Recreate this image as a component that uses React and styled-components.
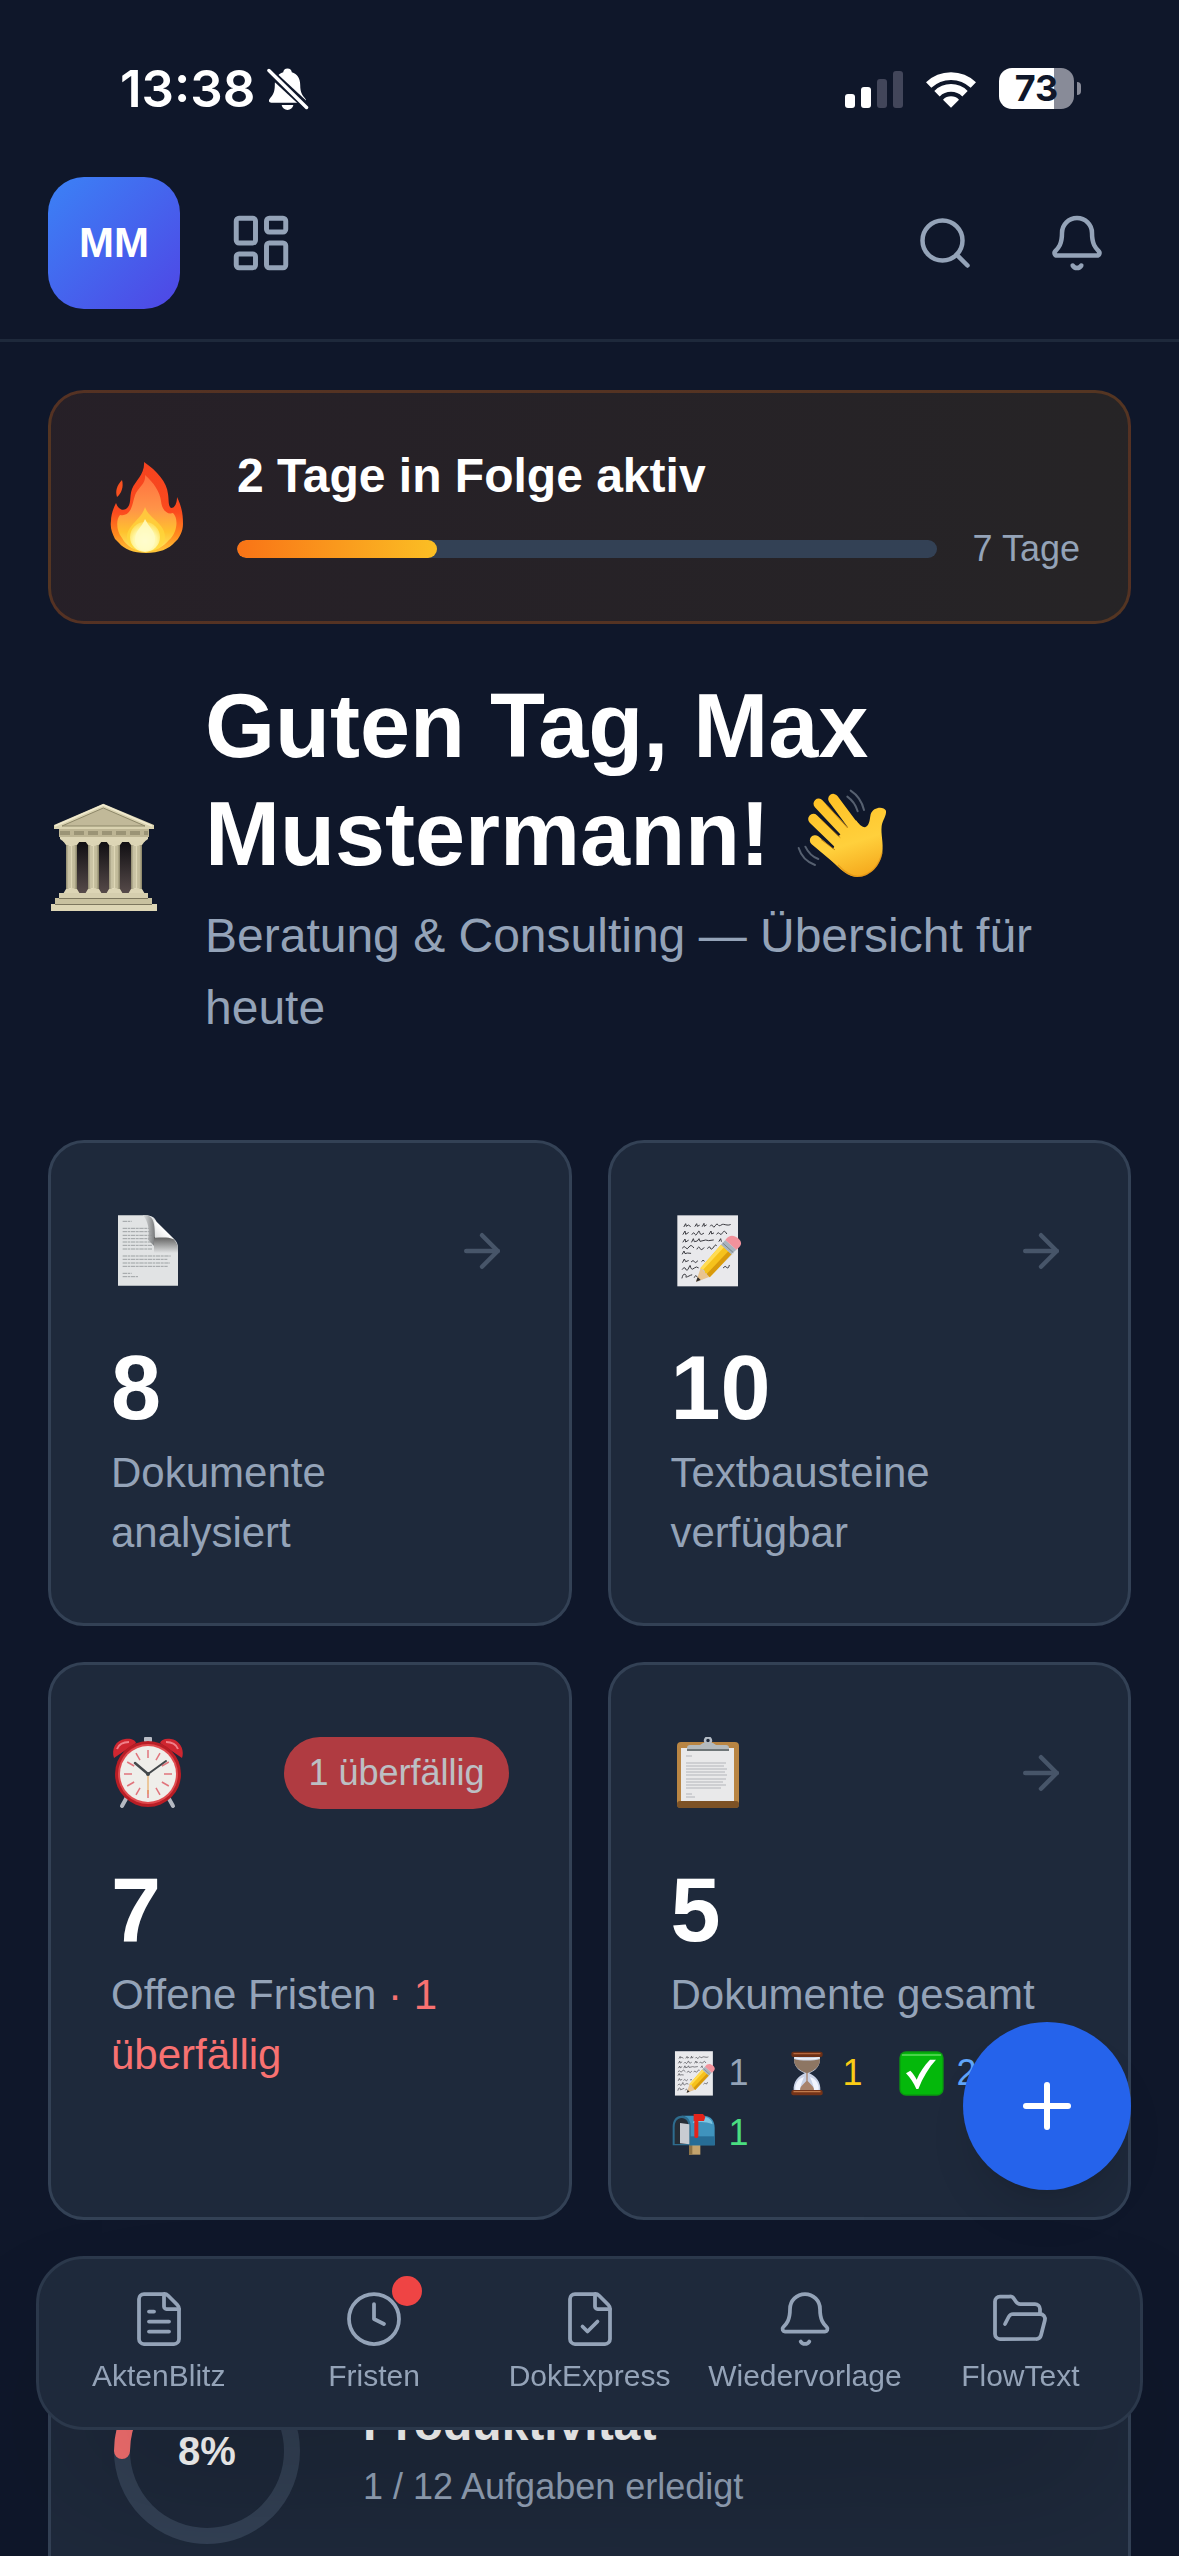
import React from 'react';
import styled, { createGlobalStyle } from 'styled-components';
import {
    ArrowRight, Bell, Clock, FileCheck, FileText, FolderOpen, LayoutDashboard, Plus, Search
} from 'lucide-react';

const GlobalStyle = createGlobalStyle`
    *, *::before, *::after {
        box-sizing: border-box;
    }
    body {
        margin: 0;
        background: #0f172a;
        color: #ffffff;
        font-family: "Liberation Sans", Arial, sans-serif;
    }
    a {
        color: inherit;
        text-decoration: none;
    }
    button {
        font: inherit;
        color: inherit;
        background: none;
        border: 0;
        padding: 0;
        cursor: pointer;
    }
    svg {
        display: block;
        flex: none;
    }
`

const Shell = styled.div`
    display: flex;
    flex-direction: column;
    height: 100vh;
    overflow: hidden;
`

/* ---------- status bar ---------- */

const StatusBar = styled.div`
    display: flex;
    flex: none;
    align-items: center;
    justify-content: space-between;
    height: 153px;
    padding: 24px 98px 0 120px;
    font-family: Inter, sans-serif;
`
const StatusGroup = styled.div`
    display: flex;
    align-items: center;
    gap: ${(props) => props.$gap}px;
`
const Time = styled.span`
    font-size: 51px;
    line-height: 60px;
    font-weight: 600;
`
const BatteryWrap = styled.div`
    display: flex;
    align-items: center;
    gap: 3px;
`
const Battery = styled.div`
    width: 75px;
    height: 41px;
    border-radius: 13px;
    background: linear-gradient(90deg, #ffffff 74%, #888b98 74%);
    color: #0f172a;
    font-size: 36px;
    line-height: 41px;
    font-weight: 700;
    text-align: center;
`
const BatteryCap = styled.div`
    width: 4px;
    height: 13px;
    border-radius: 0 4px 4px 0;
    background: #888b98;
`

/* ---------- top bar ---------- */

const Header = styled.header`
    display: flex;
    flex: none;
    align-items: center;
    justify-content: space-between;
    padding: 24px 48px 30px;
    border-bottom: 3px solid #1e293b;
`
const HeaderGroup = styled.div`
    display: flex;
    align-items: center;
    gap: ${(props) => props.$gap}px;
`
const Avatar = styled.button`
    width: 132px;
    height: 132px;
    border-radius: 36px;
    background: linear-gradient(135deg, #3b82f6, #4f46e5);
    font-size: 42px;
    font-weight: 700;
`
const IconButton = styled.button`
    display: flex;
    align-items: center;
    justify-content: center;
    width: 108px;
    height: 108px;
    color: #94a3b8;
`

/* ---------- content ---------- */

const Main = styled.main`
    flex: 1;
    min-height: 0;
    overflow-y: auto;
    scrollbar-width: none;
    padding: 48px 48px 180px;
`
const Streak = styled.section`
    display: flex;
    align-items: center;
    gap: 42px;
    padding: 48px;
    border: 3px solid rgba(249, 115, 22, 0.22);
    border-radius: 36px;
    background: linear-gradient(90deg, rgba(249, 115, 22, 0.1), rgba(245, 158, 11, 0.1));
`
const StreakBody = styled.div`
    display: flex;
    flex: 1;
    flex-direction: column;
    gap: 14px;
`
const StreakTitle = styled.h2`
    margin: 0;
    font-size: 48px;
    line-height: 70px;
    font-weight: 700;
`
const StreakRow = styled.div`
    display: flex;
    align-items: center;
    gap: 36px;
    font-size: 36px;
    line-height: 48px;
    color: #94a3b8;
`
const Track = styled.div`
    flex: 1;
    height: 18px;
    border-radius: 9px;
    background: #334155;
    overflow: hidden;
`
const Fill = styled.div`
    height: 100%;
    border-radius: 9px;
    background: linear-gradient(90deg, #f97316, #fbbf24);
`

const Greeting = styled.section`
    display: flex;
    align-items: center;
    gap: 44px;
    margin: 48px 0 96px;
`
const GreetingTitle = styled.h1`
    margin: 0 0 12px;
    font-size: 90px;
    line-height: 108px;
    font-weight: 700;
    & > svg {
        display: inline-block;
        vertical-align: -16px;
    }
`
const GreetingText = styled.p`
    margin: 0;
    font-size: 48px;
    line-height: 72px;
    color: #94a3b8;
`

const Grid = styled.div`
    display: grid;
    grid-template-columns: 1fr 1fr;
    gap: 36px;
`
const Card = styled.a`
    display: block;
    padding: 60px;
    border: 3px solid #334155;
    border-radius: 36px;
    background: #1e293b;
`
const CardTop = styled.div`
    display: flex;
    align-items: center;
    justify-content: space-between;
    height: 96px;
    margin-bottom: 44px;
    color: #475569;
`
const Pill = styled.span`
    padding: 12px 24px;
    border-radius: 36px;
    background: #ef4444;
    color: #ffffff;
    font-size: 36px;
    line-height: 48px;
    opacity: 0.7;
`
const Count = styled.div`
    margin-bottom: 10px;
    font-size: 90px;
    line-height: 90px;
    font-weight: 700;
`
const Label = styled.div`
    font-size: 42px;
    line-height: 60px;
    color: #94a3b8;
`
const Overdue = styled.span`
    color: #f87171;
`
const Stats = styled.div`
    display: flex;
    flex-wrap: wrap;
    gap: 12px 36px;
    margin-top: 24px;
`
const Stat = styled.span`
    display: flex;
    align-items: center;
    gap: 13px;
    font-size: 36px;
    line-height: 48px;
    color: ${(props) => props.$color};
`

const Progress = styled.section`
    display: flex;
    align-items: center;
    gap: 60px;
    margin-top: 72px;
    padding: 60px;
    border: 3px solid #334155;
    border-radius: 36px;
    background: #1e293b;
`
const Ring = styled.div`
    display: grid;
    place-items: center;
    & > * {
        grid-area: 1 / 1;
    }
`
const Percent = styled.span`
    font-size: 40px;
    line-height: 60px;
    font-weight: 700;
`
const ProgressTitle = styled.h2`
    margin: 0;
    font-size: 48px;
    line-height: 72px;
    font-weight: 700;
`
const ProgressText = styled.p`
    margin: 0;
    font-size: 36px;
    line-height: 54px;
    color: #94a3b8;
`

/* ---------- floating parts ---------- */

const AddButton = styled.button`
    position: fixed;
    right: 48px;
    bottom: 366px;
    z-index: 20;
    display: flex;
    align-items: center;
    justify-content: center;
    width: 168px;
    height: 168px;
    border-radius: 50%;
    background: #2563eb;
    box-shadow: 0 30px 45px -9px rgba(0, 0, 0, 0.1), 0 12px 18px -12px rgba(0, 0, 0, 0.1);
`
const Nav = styled.nav`
    position: fixed;
    left: 36px;
    right: 36px;
    bottom: 126px;
    z-index: 10;
    display: flex;
    padding: 12px;
    border: 3px solid #2b384b;
    border-radius: 48px;
    background: #1e293b;
    box-shadow: 0 75px 150px -36px rgba(0, 0, 0, 0.25);
`
const NavItem = styled.a`
    display: flex;
    flex: 1 1 0;
    min-width: 0;
    flex-direction: column;
    align-items: center;
    gap: 6px;
    padding: 18px 0;
    color: #94a3b8;
    font-size: 30px;
    line-height: 42px;
`
const NavIcon = styled.span`
    position: relative;
`
const Dot = styled.span`
    position: absolute;
    top: -13px;
    right: -18px;
    width: 30px;
    height: 30px;
    border-radius: 50%;
    background: #ef4444;
`

/* ---------- drawings ---------- */

const BellOff = () => (
    <svg width="42" height="44" viewBox="1 0 43 44" fill="#ffffff">
        <path d="M22 1c-2.600 0-4.200 1.600-4.400 3.900C12 6.500 9 11.500 9 18c0 8-2.500 10.800-5 13.700C2.200 33.800 3 36 5.500 36h33c2.500 0 3.300-2.200 1.500-4.300C37.500 28.800 35 26 35 18c0-6.500-3-11.500-8.600-13.100C26.200 2.600 24.600 1 22 1z" />
        <path d="M16 38.500h12c-.6 3-3 5-6 5s-5.400-2-6-5z" />
        <path d="M3 4L43 41" stroke="#0f172a" strokeWidth="8" />
        <path d="M3 3L41.500 41" stroke="#ffffff" strokeWidth="3.500" strokeLinecap="round" />
    </svg>
)

const Signal = () => (
    <svg width="58" height="38" viewBox="0 0 58 38" fill="#ffffff">
        <rect x="0" y="24" width="10" height="14" rx="3" />
        <rect x="16" y="17" width="10" height="21" rx="3" />
        <rect x="32" y="9" width="10" height="29" rx="3" fill="#42465a" />
        <rect x="48" y="1" width="10" height="37" rx="3" fill="#42465a" />
    </svg>
)

const Wifi = () => (
    <svg width="50" height="38" viewBox="440 85 150 114" fill="none" stroke="#ffffff" strokeWidth="23">
        <path d="M448 130A97 97 0 0 1 582 130" />
        <path d="M473 156A60 60 0 0 1 557 156" />
        <path d="M515 198L491 174A34 34 0 0 1 539 174Z" fill="#ffffff" stroke="none" />
    </svg>
)

const Fire = () => (
    <svg width="96" height="96" viewBox="0 0 96 96">
        <defs>
            <linearGradient id="fire" x1="0" y1="0" x2="0" y2="1">
                <stop offset="0" stopColor="#f4431f" />
                <stop offset="0.55" stopColor="#fb4a1e" />
                <stop offset="0.8" stopColor="#ff8a1e" />
                <stop offset="1" stopColor="#ffc93a" />
            </linearGradient>
            <linearGradient id="fireCore" x1="0" y1="0" x2="0" y2="1">
                <stop offset="0" stopColor="#ff7040" />
                <stop offset="0.45" stopColor="#ff9448" />
                <stop offset="0.75" stopColor="#ffc22e" />
                <stop offset="1" stopColor="#ffe766" />
            </linearGradient>
            <radialGradient id="fireGlow" gradientUnits="userSpaceOnUse" cx="46" cy="82" r="26">
                <stop offset="0" stopColor="#ffffff" />
                <stop offset="0.45" stopColor="#fff7a6" />
                <stop offset="1" stopColor="#ffdf45" stopOpacity="0" />
            </radialGradient>
        </defs>
        <path d="M45 3C58 12 68 23 69 35C70 41 69 47 72 49C76 49 78 44 78 38C83 48 84 56 84 65C84 73 80 78 79 80L76 83C70 90 60 94 47 94C34 94 25 90 20 84L16 80C13 74 11 69 12 62C12 56 14 50 17 44C19 50 23 52 27 50C33 46 30 38 33 30C37 21 46 15 45 3Z" fill="url(#fire)" />
        <path d="M23 21C25 28 22 35 18 38C16 32 18 26 23 21Z" fill="#f8501f" />
        <path d="M46 16C55 24 61 33 62 42C63 52 69 56 74 54C80 60 78 74 70 81C64 88 57 92 47 92C36 92 28 88 23 79C17 72 17 60 21 56C34 58 33 42 37 34C41 27 47 24 46 16Z" fill="url(#fireCore)" />
        <path d="M46 48C50 60 66 64 66 78C66 88 56 93 46 93C37 93 28 87 28 78C28 66 43 60 46 48Z" fill="#ffd83c" opacity="0.7" />
        <circle cx="46" cy="78" r="15" fill="url(#fireGlow)" />
        <path d="M46 60C50 68 56 72 56 80C56 88 51 92 46 92C41 92 36 88 36 80C36 72 43 68 46 60Z" fill="#fffbc4" opacity="0.85" />
    </svg>
)

const Temple = () => (
    <svg width="113" height="113" viewBox="0 0 113 113">
        <defs>
            <linearGradient id="column" x1="0" x2="1">
                <stop offset="0" stopColor="#8f8a6e" />
                <stop offset="0.35" stopColor="#e6dfc0" />
                <stop offset="0.7" stopColor="#d3ccab" />
                <stop offset="1" stopColor="#858064" />
            </linearGradient>
            <linearGradient id="inside" x1="0" y1="0" x2="0" y2="1">
                <stop offset="0" stopColor="#0d0c10" />
                <stop offset="1" stopColor="#574b4a" />
            </linearGradient>
        </defs>
        <rect x="22" y="38" width="70" height="54" fill="url(#inside)" />
        <path d="M55.300 1.700L106 23V27H6V23Z" fill="#d9d2b0" />
        <path d="M55.300 6L97 24H14Z" fill="#c1b999" stroke="#8d8769" strokeWidth="1" />
        <path d="M55.300 3L104 24M55.300 3L7 24" stroke="#f0ead0" strokeWidth="1.500" />
        <rect x="11" y="27" width="90" height="8" fill="#bdb594" />
        <path d="M12 31H100" stroke="#857f63" strokeWidth="4" strokeDasharray="10 4" opacity="0.6" />
        <path d="M12 35H100V37L96 40H16L12 37Z" fill="#ddd6b6" />
        {[18, 40, 61, 83].map((x) => (
            <g key={x}>
                <rect x={x} y="39" width="11" height="52" fill="url(#column)" />
                <path d={`M${x - 3} 39h17l-3 4h-11zM${x - 3} 92h17l-3 -5h-11z`} fill="#dcd5b5" />
                <path d={`M${x + 4} 44v42M${x + 7} 44v42`} stroke="#aaa383" strokeWidth="0.800" />
            </g>
        ))}
        <rect x="11" y="91" width="89" height="6" fill="#d5ceae" />
        <rect x="7" y="96" width="97" height="7" fill="#c8c19f" />
        <rect x="3" y="102" width="106" height="7" fill="#ddd6b5" />
        <path d="M11 96.500H100M7 102.500H104" stroke="#7d775e" strokeWidth="1" />
    </svg>
)

const Wave = () => (
    <svg width="96" height="96" viewBox="39 42 288 288" role="img" aria-label="Winken">
        <defs>
            <linearGradient id="hand" gradientUnits="userSpaceOnUse" x1="150" y1="70" x2="230" y2="320">
                <stop offset="0" stopColor="#ffc125" />
                <stop offset="0.6" stopColor="#ffd03c" />
                <stop offset="1" stopColor="#f5a91d" />
            </linearGradient>
        </defs>
        <g fill="none" stroke="url(#hand)" strokeWidth="31" strokeLinecap="round">
            <path d="M99 208L190 284" />
            <path d="M94 144L195 242" />
            <path d="M110 98L210 205" />
            <path d="M154 84L240 200" />
        </g>
        <path d="M140 258C175 298 200 318 226 318C265 316 294 285 301 245C305 215 296 190 299 165C301 148 314 134 312 119C305 105 273 107 266 130C262 152 262 164 249 169C238 168 230 158 222 148L170 195L155 230Z" fill="url(#hand)" />
        <g fill="none" stroke="#b06c06" strokeWidth="3" strokeLinecap="round" opacity="0.75">
            <path d="M118 206L158 236" />
            <path d="M118 146L174 199" />
            <path d="M136 104L196 170" />
        </g>
        <path d="M168 282C195 312 215 317 232 316C265 312 292 285 300 245" fill="none" stroke="#d98a12" strokeWidth="4" opacity="0.6" />
        <g fill="none" stroke="#566070" strokeWidth="6" strokeLinecap="round">
            <path d="M206 59C226 72 240 92 246 117" />
            <path d="M196 77C210 87 222 103 227 121" />
            <path d="M50 231C57 254 75 273 99 282" />
            <path d="M70 227C78 244 92 258 109 264" />
        </g>
    </svg>
)

const Page = () => (
    <svg width="72" height="72" viewBox="93 104 216 216">
        <defs>
            <linearGradient id="curl" x1="0" y1="1" x2="1" y2="0">
                <stop offset="0" stopColor="#d5d7d8" />
                <stop offset="0.5" stopColor="#ffffff" />
            </linearGradient>
            <linearGradient id="fold" x1="0" y1="0" x2="0" y2="1">
                <stop offset="0" stopColor="#5f5f5f" />
                <stop offset="1" stopColor="#e1e3e4" />
            </linearGradient>
            <linearGradient id="foldSide" x1="0" y1="0" x2="1" y2="0">
                <stop offset="0" stopColor="#e1e3e4" />
                <stop offset="1" stopColor="#6b6d6f" />
            </linearGradient>
        </defs>
        <path d="M114 105H196C216 105 224 112 230 124L282 176C291 184 294 192 294 206V316H114Z" fill="#e1e3e4" />
        <g stroke="#8f9496" strokeWidth="2.500" strokeDasharray="13 2 8 2">
            <path d="M128 123H155M128 144H208M128 154H212M128 165H216M128 175H212M128 185H218M128 195H218M128 206H216" />
            <path d="M128 227H272M128 237H262M128 248H270M128 258H263M128 279H155M128 289H174" />
        </g>
        <path d="M188 105C216 104 225 114 225 174V200L204 178C210 150 204 120 188 105Z" fill="url(#foldSide)" opacity="0.9" />
        <path d="M222 170H270C284 176 292 188 294 204V218H222Z" fill="url(#fold)" />
        <path d="M222 118L282 177C264 169 244 172 225 172C227 152 227 134 222 118Z" fill="url(#curl)" />
    </svg>
)

const Memo = ({ size = 72 }) => (
    <svg width={size} height={size} viewBox="93 104 216 216">
        <rect x="112" y="105" width="182" height="213" fill="#e9e9ec" />
        <g fill="none" stroke="#3c3c42" strokeWidth="3" strokeLinecap="round">
            <path d="M132 139l5-9 2 8 6-4 6 4M165 138l5-8 2 8 6-3M187 138l5-9 1 9 6-4M211 137q4-8 7 0t8-1 8-3 8 2 9-3 10 2 10-1" />
            <path d="M129 162l6-10 2 10 8-5M156 162q5-9 8-1t8-2 6-6 3 8 10-2M207 162l6-10 2 9 6-3M230 161q5-8 9-1t9-3 12 3" />
            <path d="M129 185l6-9 2 9 8-5M155 185l5-10 3 9 9-2 5-7 3 8 9-2 8-2 9 2 14-2M237 183l5-8 2 8" />
            <path d="M127 203q6-9 10-1t10-2 14 2M171 206q5-11 9-2t12-2M203 204q5-9 8-1t10-3 8-4" />
            <path d="M127 221l5-9 3 8 7-2 10 1" />
            <path d="M128 246l5-10 4 8 8-3M154 244q6-7 9 0t10-2M185 243q4-7 8-1" />
            <path d="M127 267q6-10 10-1t9-3 5-7 3 9 9-2 12-1M250 262q6-8 10-1t8-6" />
            <path d="M126 293q3-14 9-11t3 7 9-2 9-3M163 291q4-10 8-2" />
        </g>
        <path d="M170 306L184 264L246 194L278 221L216 283Z" fill="#8b8b92" opacity="0.35" />
        <path d="M168 304L182 263L208 290Z" fill="#e9c48f" />
        <path d="M168 304L173 290L182 299Z" fill="#2e2b2b" />
        <path d="M181 264L243 193L274 222L209 291C206 282 200 278 196 279C195 271 190 265 181 264Z" fill="#f6c21c" />
        <path d="M181 264L243 193L252 201L189 268Z" fill="#ffdc54" />
        <path d="M200 281L265 213L274 222L209 291Z" fill="#d99a0c" />
        <path d="M243 193L256 179L289 208L274 222Z" fill="#a9b4bd" />
        <path d="M248 188L280 217" stroke="#76828c" strokeWidth="3" />
        <path d="M256 179C268 162 282 164 294 174C306 184 308 196 289 208Z" fill="#f2929c" />
    </svg>
)

const AlarmClock = () => (
    <svg width="72" height="72" viewBox="0 0 72 72">
        <path d="M16 60L11 69M57 60L62 69" stroke="#b5b9c2" strokeWidth="4" strokeLinecap="round" />
        <rect x="33" y="0" width="8" height="5" rx="1" fill="#b9bdc6" />
        <path d="M3 21C0 12 5 3 14 2C20 1 24 3 25 6Z" fill="#cf2630" />
        <path d="M71 21C74 12 68 3 60 2C54 1 50 3 49 6Z" fill="#cf2630" />
        <path d="M6 12C8 7 13 5 18 5M55 5C60 5 65 7 67 12" fill="none" stroke="#f0808a" strokeWidth="2" />
        <circle cx="37" cy="37" r="33" fill="#b91d25" />
        <circle cx="37" cy="37" r="30" fill="#e04a4e" />
        <circle cx="37" cy="37" r="28" fill="#efeeea" />
        <g stroke="#e0737b" strokeWidth="1.500">
            {[0, 30, 60, 90, 120, 150, 180, 210, 240, 270, 300, 330].map((angle) => (
                <path key={angle} d="M37 13v8" transform={`rotate(${angle} 37 37)`} />
            ))}
        </g>
        <path d="M37 37L24 26" stroke="#43484b" strokeWidth="2.500" strokeLinecap="round" />
        <path d="M37 37L55 24" stroke="#43484b" strokeWidth="2" strokeLinecap="round" />
        <path d="M37 37V57" stroke="#e8a04c" strokeWidth="1" />
        <circle cx="37" cy="37" r="2" fill="#43484b" />
    </svg>
)

const Clipboard = () => (
    <svg width="72" height="72" viewBox="0 0 72 72">
        <rect x="6" y="5" width="62" height="66" rx="4" fill="#b98543" />
        <rect x="6" y="64" width="62" height="7" rx="3" fill="#7d5226" />
        <rect x="10" y="11" width="53" height="53" fill="#e9e9ea" />
        <circle cx="37" cy="3.500" r="3" fill="none" stroke="#b4bcc6" strokeWidth="2.500" />
        <path d="M32 6H42L45 8H55C57 8 58 9 58 11V14H16V11C16 9 17 8 19 8H29Z" fill="#b4babd" />
        <path d="M16 13H58" stroke="#6f7678" strokeWidth="2" />
        <path d="M15 19H21M15 26H55M15 29H53M15 32H56M15 35H54M15 38H56M15 42H55M15 45H52M15 48H55M15 51H50M15 57H21M15 60H24" stroke="#b3b6ba" strokeWidth="1.200" />
    </svg>
)

const Hourglass = () => (
    <svg width="45" height="45" viewBox="379 60 135 135">
        <path d="M406 78H484C486 104 472 118 452 127C472 136 487 152 485 180H405C403 152 418 136 438 127C418 118 404 104 406 78Z" fill="#c9d2e6" />
        <path d="M406 84C424 90 466 90 484 84C485 106 468 119 445 127C422 119 405 106 406 84Z" fill="#8d7663" />
        <path d="M408 80C425 85 465 85 482 80" stroke="#f3f3f5" strokeWidth="4" fill="none" />
        <path d="M443 126H447V150C456 160 468 170 470 180H420C422 170 434 160 443 150Z" fill="#a8836c" />
        <path d="M410 176C408 156 422 142 436 138C430 152 424 166 424 178ZM480 176C482 156 468 142 454 138C460 152 466 166 466 178Z" fill="#f2f5ff" />
        <rect x="398" y="62" width="94" height="16" rx="6" fill="#6d3016" />
        <rect x="404" y="66" width="82" height="4" rx="2" fill="#b5663d" />
        <rect x="398" y="177" width="94" height="16" rx="6" fill="#743318" />
        <rect x="404" y="180" width="82" height="4" rx="2" fill="#c07a4c" />
    </svg>
)

const CheckMark = () => (
    <svg width="45" height="45" viewBox="720 60 135 135">
        <rect x="721" y="61" width="133" height="133" rx="20" fill="#0a9a10" />
        <rect x="725" y="65" width="125" height="125" rx="16" fill="#04b80b" />
        <path d="M730 72H845" stroke="#5fdc5f" strokeWidth="4" strokeLinecap="round" />
        <path d="M741 127L754 119C762 127 768 136 773 146C782 124 796 103 813 86H831C809 110 791 140 778 174H772C764 156 754 140 741 127Z" fill="#ffffff" />
    </svg>
)

const Mailbox = () => (
    <svg width="45" height="45" viewBox="35 244 135 135">
        <rect x="89" y="340" width="34" height="35" fill="#c3a36d" />
        <rect x="89" y="340" width="10" height="35" fill="#8e7345" />
        <path d="M66 258H136C156 260 166 274 166 294V347H92V290C92 272 82 260 66 258Z" fill="#3f93bd" />
        <path d="M92 320H166V347H92Z" fill="#276d96" />
        <path d="M110 262H136C150 264 158 272 160 284C140 276 120 276 100 280Z" fill="#7cc4e2" />
        <path d="M40 347V290C40 272 50 258 67 258C84 258 94 272 94 290V347Z" fill="#2e6c8e" />
        <path d="M46 343V292C46 276 54 265 67 265C80 265 88 276 88 292V343Z" fill="#262d36" />
        <path d="M62 280L90 284V344L62 341Z" fill="#c8ccd2" />
        <path d="M103 253H131L138 262L134 274H117V320C117 327 105 327 105 320V274H103Z" fill="#e3241b" />
    </svg>
)

//gauge starts at nine o'clock and fills clockwise
const Gauge = ({ value }) => {
    const length = 2 * Math.PI * 85
    return (
        <svg width="192" height="192" viewBox="0 0 192 192" fill="none" strokeWidth="16">
            <circle cx="96" cy="96" r="85" stroke="#334155" />
            <circle cx="96" cy="96" r="85" stroke="#f87171" strokeLinecap="round"
                strokeDasharray={`${length * value / 100} ${length}`} transform="rotate(180 96 96)" />
        </svg>
    )
}

/* ---------- page ---------- */

const stats = [
    { icon: <Memo size={45} />, value: 1, color: '#94a3b8' },
    { icon: <Hourglass />, value: 1, color: '#facc15' },
    { icon: <CheckMark />, value: 2, color: '#60a5fa' },
    { icon: <Mailbox />, value: 1, color: '#4ade80' },
]

const navItems = [
    { label: 'AktenBlitz', Icon: FileText },
    { label: 'Fristen', Icon: Clock, dot: true },
    { label: 'DokExpress', Icon: FileCheck },
    { label: 'Wiedervorlage', Icon: Bell },
    { label: 'FlowText', Icon: FolderOpen },
]

const StatCard = ({ icon, badge, count, children }) => (
    <Card href="#">
        <CardTop>
            {icon}
            {badge ? <Pill>{badge}</Pill> : <ArrowRight size={54} strokeWidth={2} />}
        </CardTop>
        <Count>{count}</Count>
        {children}
    </Card>
)

const App = () => {
    const activeDays = 2
    const goalDays = 7

    return (
        <Shell>
            <GlobalStyle />
            <StatusBar>
                <StatusGroup $gap={12}>
                    <Time>13:38</Time>
                    <BellOff />
                </StatusGroup>
                <StatusGroup $gap={23}>
                    <Signal />
                    <Wifi />
                    <BatteryWrap>
                        <Battery>73</Battery>
                        <BatteryCap />
                    </BatteryWrap>
                </StatusGroup>
            </StatusBar>

            <Header>
                <HeaderGroup $gap={27}>
                    <Avatar>MM</Avatar>
                    <IconButton aria-label="Dashboard"><LayoutDashboard size={66} strokeWidth={1.8} /></IconButton>
                </HeaderGroup>
                <HeaderGroup $gap={24}>
                    <IconButton aria-label="Suche"><Search size={60} strokeWidth={1.8} /></IconButton>
                    <IconButton aria-label="Mitteilungen"><Bell size={60} strokeWidth={1.8} /></IconButton>
                </HeaderGroup>
            </Header>

            <Main>
                <Streak>
                    <Fire />
                    <StreakBody>
                        <StreakTitle>{activeDays} Tage in Folge aktiv</StreakTitle>
                        <StreakRow>
                            <Track>
                                <Fill style={{ width: `${activeDays / goalDays * 100}%` }} />
                            </Track>
                            <span>{goalDays} Tage</span>
                        </StreakRow>
                    </StreakBody>
                </Streak>

                <Greeting>
                    <Temple />
                    <div>
                        <GreetingTitle>Guten Tag, Max Mustermann! <Wave /></GreetingTitle>
                        <GreetingText>Beratung &amp; Consulting — Übersicht für heute</GreetingText>
                    </div>
                </Greeting>

                <Grid>
                    <StatCard icon={<Page />} count={8}>
                        <Label>Dokumente analysiert</Label>
                    </StatCard>
                    <StatCard icon={<Memo />} count={10}>
                        <Label>Textbausteine verfügbar</Label>
                    </StatCard>
                    <StatCard icon={<AlarmClock />} badge="1 überfällig" count={7}>
                        <Label>Offene Fristen <Overdue>· 1 überfällig</Overdue></Label>
                    </StatCard>
                    <StatCard icon={<Clipboard />} count={5}>
                        <Label>Dokumente gesamt</Label>
                        <Stats>
                            {stats.map((stat, i) => (
                                <Stat key={i} $color={stat.color}>{stat.icon}{stat.value}</Stat>
                            ))}
                        </Stats>
                    </StatCard>
                </Grid>

                <Progress>
                    <Ring>
                        <Gauge value={8} />
                        <Percent>8%</Percent>
                    </Ring>
                    <div>
                        <ProgressTitle>Produktivität</ProgressTitle>
                        <ProgressText>1 / 12 Aufgaben erledigt</ProgressText>
                    </div>
                </Progress>
            </Main>

            <AddButton aria-label="Neu"><Plus size={72} strokeWidth={2} /></AddButton>

            <Nav>
                {navItems.map(({ label, Icon, dot }) => (
                    <NavItem key={label} href="#">
                        <NavIcon>
                            <Icon size={60} strokeWidth={1.5} />
                            {dot && <Dot />}
                        </NavIcon>
                        {label}
                    </NavItem>
                ))}
            </Nav>
        </Shell>
    )
}

export default App;
